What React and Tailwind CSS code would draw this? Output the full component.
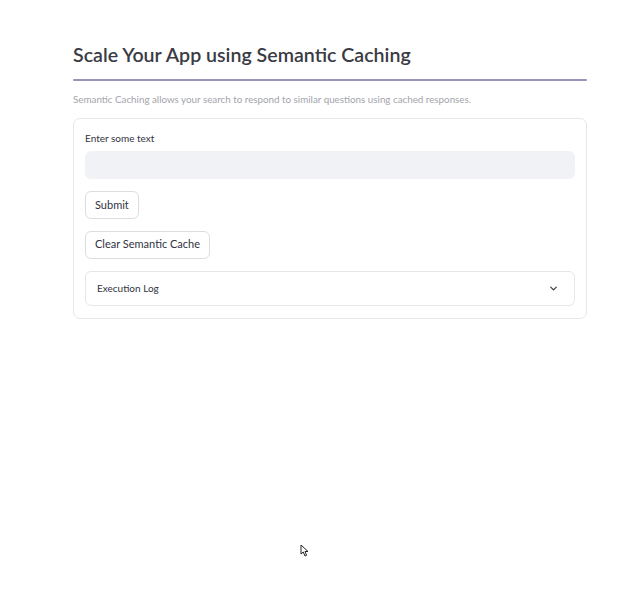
import React from 'react';

const font = { fontFamily: 'Lato, "Open Sans", sans-serif' };

export default function App() {
  return (
    <div className="relative w-[640px] h-[590px] bg-white text-[#31333f]" style={font}>
      <div className="pl-[73px] pr-[53px] pt-[42px] flex flex-col">
        <h1 className="text-[19.6px] leading-[26px] font-semibold text-[#3a3b44]">
          Scale Your App using Semantic Caching
        </h1>
        <div className="mt-[11px] h-[2px] bg-[#9c90bd] rounded-full"></div>
        <p className="mt-[11px] text-[9.8px] leading-[14px] text-[#a3a4ab]">
          Semantic Caching allows your search to respond to similar questions using cached responses.
        </p>

        {/* Form */}
        <div className="mt-[12px] border border-[#e6e7ea] rounded-[7px] px-[11px] pt-[12px] pb-[12px] flex flex-col">
          <label className="text-[10px] leading-[14px] text-[#31333f]">Enter some text</label>
          <div className="mt-[6px] h-[28px] rounded-[6px] bg-[#f0f2f6]"></div>
          <div className="mt-[12px]">
            <button className="h-[28px] px-[9px] border border-[#dcdde1] rounded-[6px] bg-white text-[11px] text-[#31333f]">
              Submit
            </button>
          </div>
          <div className="mt-[11px]">
            <button className="h-[28px] px-[9px] border border-[#dcdde1] rounded-[6px] bg-white text-[11px] text-[#31333f]">
              Clear Semantic Cache
            </button>
          </div>
          <div className="mt-[12px] h-[35px] border border-[#e6e7ea] rounded-[6px] flex items-center justify-between pl-[11px] pr-[15px]">
            <span className="text-[10px] text-[#31333f]">Execution Log</span>
            <svg width="11" height="11" viewBox="0 0 24 24" fill="none" stroke="#31333f" strokeWidth="2.5" strokeLinecap="round" strokeLinejoin="round">
              <path d="M6 9l6 6 6-6" />
            </svg>
          </div>
        </div>
      </div>

      {/* mouse cursor */}
      <svg className="absolute left-[300px] top-[544px]" width="10" height="13" viewBox="0 0 10 13">
        <path d="M1 1 L1 10 L3.3 8 L5 12 L6.6 11.3 L5 7.5 L8 7.5 Z" fill="white" stroke="#222" strokeWidth="1" strokeLinejoin="round" />
      </svg>
    </div>
  );
}
